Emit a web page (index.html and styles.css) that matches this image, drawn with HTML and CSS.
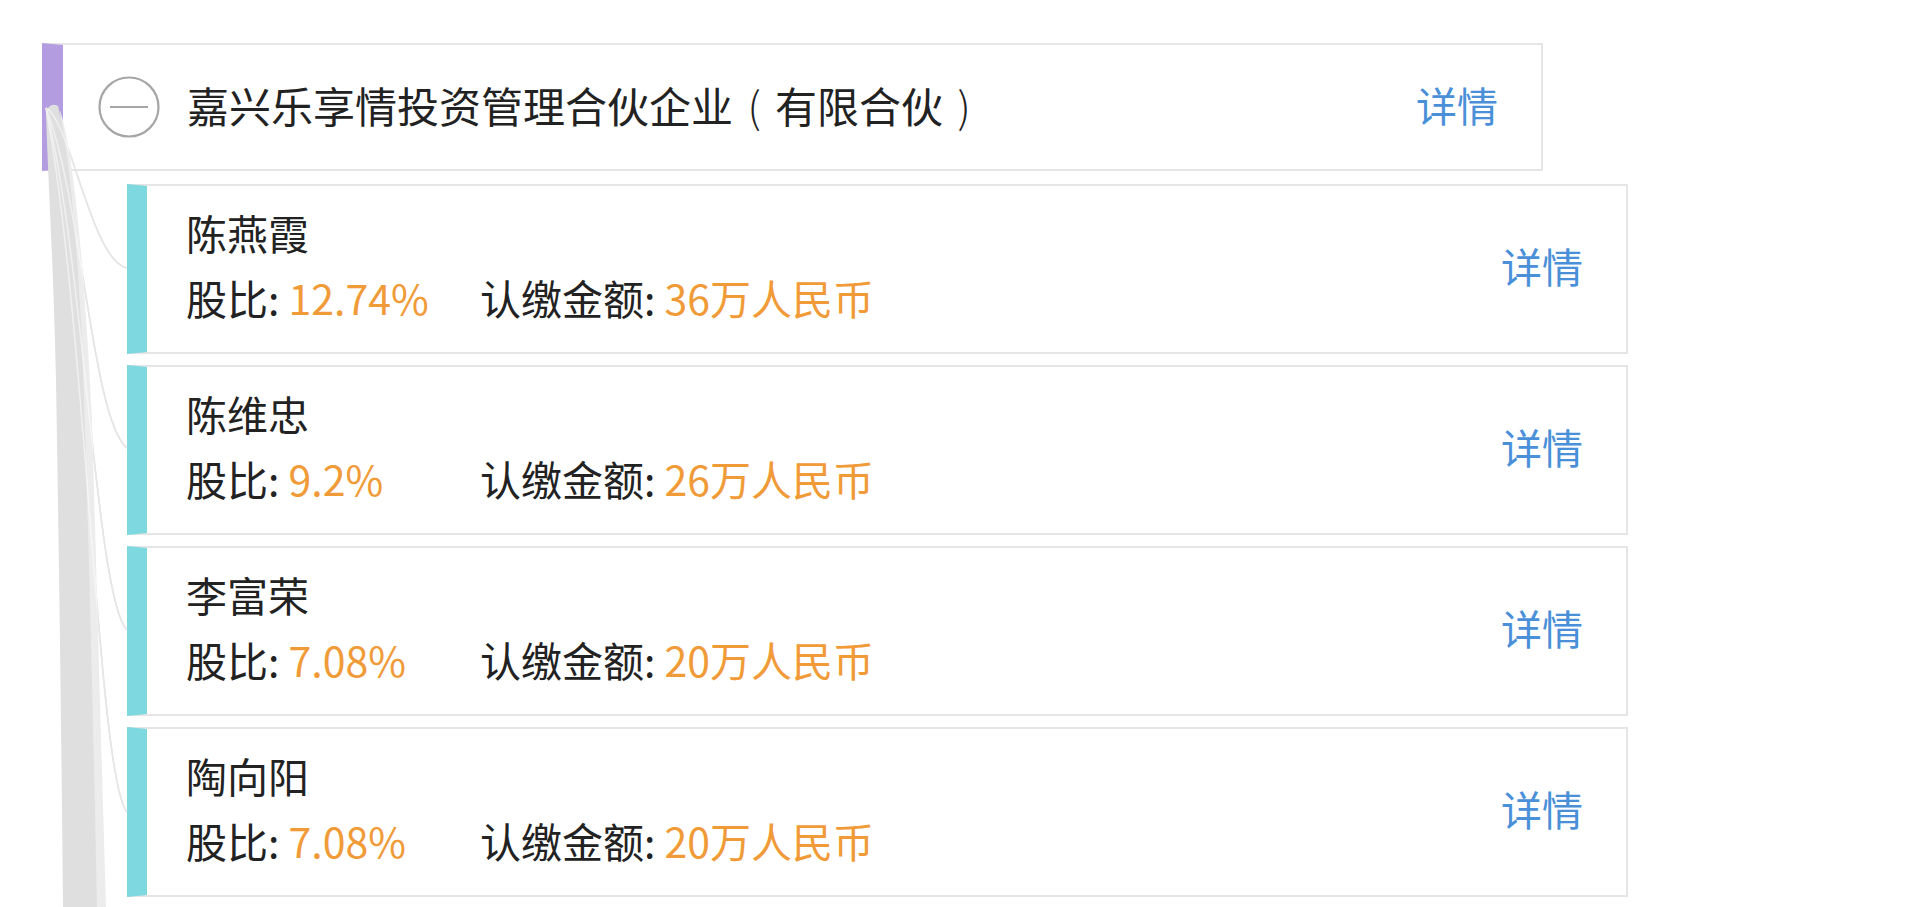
FILE: index.html
```html
<!DOCTYPE html>
<html lang="zh-CN">
<head>
  <meta charset="UTF-8">
  <title>股东结构</title>
  <link rel="stylesheet" href="styles.css">
</head>
<body>
  <div class="tree">
    <!-- connector lines from the parent node down to each partner -->
    <svg class="links" width="200" height="907" viewBox="0 0 200 907">
      <g fill="none" stroke="#c9c9c9" stroke-width="1.5">
        <path d="M46,108 C70,120 92,262 127,268"/>
        <path d="M46,108 C82,200 92,420 127,448"/>
        <path d="M46,108 C84,260 96,600 127,630"/>
        <path d="M46,108 C86,320 98,780 127,812"/>
      </g>
      <path class="band-soft" d="M60,110 C76,160 86,300 92,420 C96,560 100,700 106,907 L90,907 C86,700 82,520 76,380 C70,240 64,160 60,110 Z"/>
      <path class="band" d="M46,112 Q50,102 58,106 C70,150 78,260 82,340 C86,450 92,650 97,907 L63,907 C61,700 59,560 56,380 C53,250 48,180 46,112 Z"/>
      <g fill="none" stroke="#fff" stroke-width="1.5" opacity="0.55">
        <path d="M46,108 C70,120 92,262 127,268"/>
        <path d="M46,108 C82,200 92,420 127,448"/>
        <path d="M46,108 C84,260 96,600 127,630"/>
        <path d="M46,108 C86,320 98,780 127,812"/>
      </g>
    </svg>

    <div class="node parent">
      <svg class="toggle" width="62" height="62" viewBox="0 0 62 62">
        <circle cx="31" cy="31" r="29.5" fill="none" stroke="#a6a6a6" stroke-width="2.2"/>
        <line x1="12" y1="31" x2="50" y2="31" stroke="#a6a6a6" stroke-width="2.2"/>
      </svg>
      <span class="title">嘉兴乐享情投资管理合伙企业<span class="paren">(</span>有限合伙<span class="paren">)</span></span>
      <a class="detail">详情</a>
    </div>

    <div class="children">
      <div class="node child">
        <div class="info">
          <div class="name">陈燕霞</div>
          <div class="meta">
            <span class="share">股比: <em>12.74%</em></span>
            <span>认缴金额: <em>36万人民币</em></span>
          </div>
        </div>
        <a class="detail">详情</a>
      </div>
      <div class="node child">
        <div class="info">
          <div class="name">陈维忠</div>
          <div class="meta">
            <span class="share">股比: <em>9.2%</em></span>
            <span>认缴金额: <em>26万人民币</em></span>
          </div>
        </div>
        <a class="detail">详情</a>
      </div>
      <div class="node child">
        <div class="info">
          <div class="name">李富荣</div>
          <div class="meta">
            <span class="share">股比: <em>7.08%</em></span>
            <span>认缴金额: <em>20万人民币</em></span>
          </div>
        </div>
        <a class="detail">详情</a>
      </div>
      <div class="node child">
        <div class="info">
          <div class="name">陶向阳</div>
          <div class="meta">
            <span class="share">股比: <em>7.08%</em></span>
            <span>认缴金额: <em>20万人民币</em></span>
          </div>
        </div>
        <a class="detail">详情</a>
      </div>
    </div>
  </div>
</body>
</html>
```

FILE: styles.css
```css
body {
  margin: 0;
  background: #fff;
  font-family: "Noto Sans CJK SC", "Microsoft YaHei", sans-serif;
  font-size: 41px;
  color: #222;
  overflow: hidden;
}

.tree {
  position: relative;
  padding: 43px 0 0 42px;
  height: 907px;
  box-sizing: border-box;
}

.links {
  position: absolute;
  top: 0;
  left: 0;
  z-index: 2;
  pointer-events: none;
}

.band {
  fill: #dfdfdf;
}

.band-soft {
  fill: #ececec;
}

.node {
  display: flex;
  align-items: center;
  justify-content: space-between;
  width: 1501px;
  box-sizing: border-box;
  background: #fff;
  border: 2px solid #e5e5e5;
}

.parent {
  height: 128px;
  border-left: 21px solid #b49ce0;
  padding: 0 43px 0 35px;
}

.toggle {
  flex: none;
}

.parent .title {
  flex: 1;
  margin-left: 27px;
  font-size: 42px;
  white-space: nowrap;
}

.parent .title,
.parent .detail {
  margin-bottom: 6px;
}

/* full-width brackets, glyph centred in its box */
.paren {
  display: inline-block;
  width: 1em;
  text-align: center;
  font-weight: 300;
}

.detail {
  color: #4a90d9;
  cursor: pointer;
  white-space: nowrap;
}

.children {
  display: flex;
  flex-direction: column;
  gap: 11px;
  margin: 13px 0 0 85px;
}

.child {
  height: 170px;
  border-left: 20px solid #7dd8df;
  padding: 0 43px 8px 39px;
}

.info {
  line-height: 65px;
}

.meta {
  display: flex;
  white-space: nowrap;
}

.meta .share {
  width: 294px;
}

.meta em {
  font-style: normal;
  color: #f09b38;
}
```
